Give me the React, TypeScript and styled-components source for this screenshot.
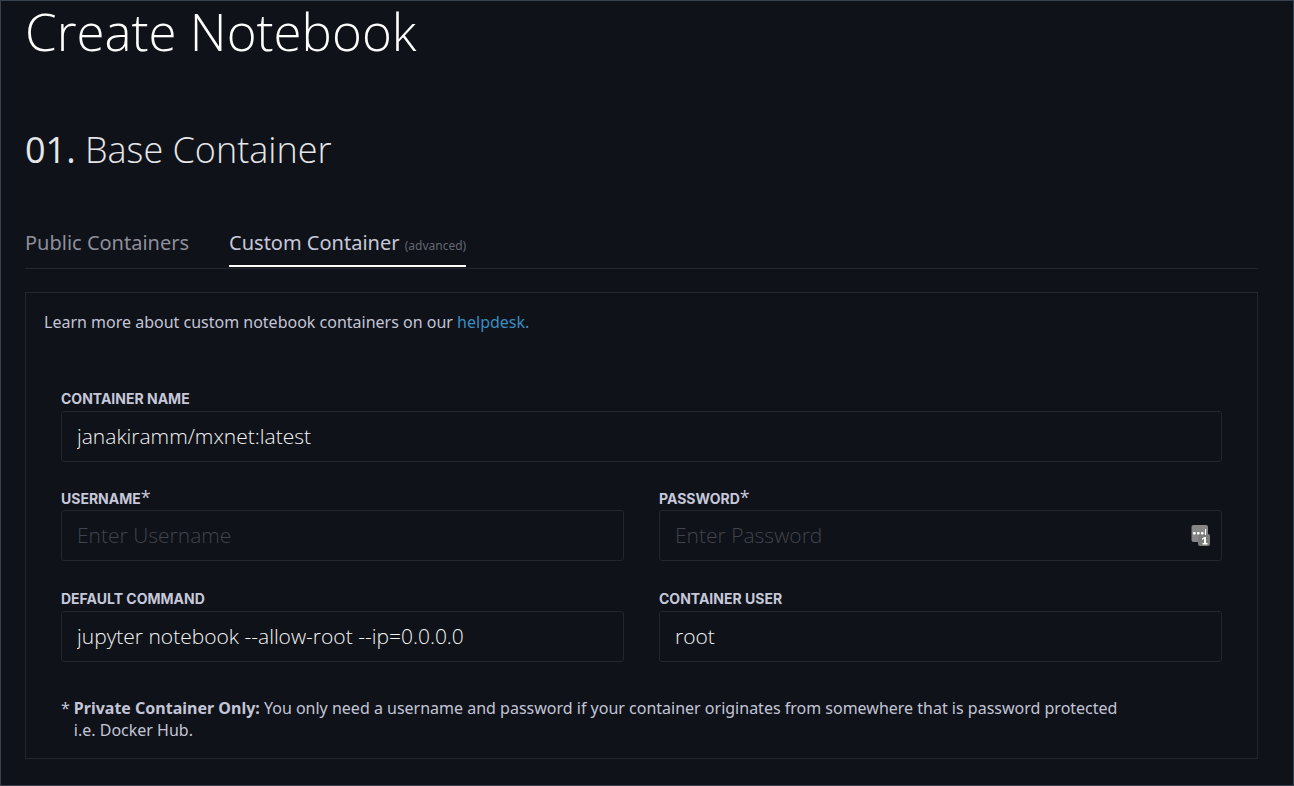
import React from "react";
import styled, { createGlobalStyle } from "styled-components";

const GlobalStyle = createGlobalStyle`
  *, *::before, *::after { box-sizing: border-box; }
  body {
    margin: 0;
    background: #0f1219;
    color: #c3c5d6;
    font-family: "Noto Sans", "Open Sans", sans-serif;
    font-size: 16px;
    line-height: 22px;
  }
`;

const Page = styled.main`
  min-height: 100vh;
  padding: 0 35px 26px 24px;
  border: 1px solid #37404c;
`;

const Title = styled.h1`
  margin: 0;
  color: #fff;
  font: 300 51px/60px "Open Sans", "Noto Sans", sans-serif;
`;

const SectionTitle = styled.h2`
  margin: 64px 0 0;
  color: #e6e6e8;
  font: 300 36px/50px "Open Sans", "Noto Sans", sans-serif;
`;

const SectionNumber = styled.span`
  font-weight: 400;
`;

const Tabs = styled.div`
  display: flex;
  gap: 40px;
  margin-top: 47px;
  border-bottom: 1px solid #23262f;
`;

const Tab = styled.button<{ $active?: boolean }>`
  height: 45px;
  padding: 0 0 2px;
  margin-bottom: 1px;
  border: 0;
  border-bottom: 2px solid ${(p) => (p.$active ? "#fff" : "transparent")};
  background: none;
  color: ${(p) => (p.$active ? "#c6c8d8" : "#8d8f9b")};
  font: 400 20px/28px "Noto Sans", "Open Sans", sans-serif;
  cursor: pointer;
`;

const TabHint = styled.small`
  color: #646672;
  font-size: 12px;
  line-height: 16px;
`;

const Panel = styled.section`
  margin-top: 23px;
  padding: 18px 35px 17px;
  border: 1px solid #23262f;
`;

const Intro = styled.p`
  margin: 0 -17px;
`;

const Link = styled.a`
  color: #3c8dc0;
  text-decoration: none;
`;

const Form = styled.form`
  display: grid;
  grid-template-columns: 1fr 1fr;
  column-gap: 35px;
  margin-top: 56px;
`;

const Field = styled.div<{ $wide?: boolean }>`
  display: flex;
  flex-direction: column;
  grid-column: ${(p) => (p.$wide ? "1 / -1" : "auto")};
  padding-bottom: ${(p) => (p.$wide ? "26px" : "28px")};
`;

const Label = styled.label`
  height: 22px;
  color: #c6c8da;
  font: 700 14px/20px Inter, "Open Sans", sans-serif;
  text-transform: uppercase;
`;

const Star = styled.span`
  font: 400 18px/18px "Open Sans", "Noto Sans", sans-serif;
`;

const InputWrap = styled.div`
  position: relative;
`;

const Input = styled.input`
  display: block;
  width: 100%;
  height: 51px;
  padding: 0 15px 1px;
  border: 1px solid #23262f;
  border-radius: 3px;
  outline: 0;
  background: transparent;
  color: #f2f2f2;
  font: 300 21px/28px "Open Sans", "Noto Sans", sans-serif;

  &::placeholder {
    color: #41444d;
    opacity: 1;
  }
`;

const FillButton = styled.button`
  position: absolute;
  top: 15px;
  right: 12px;
  display: block;
  padding: 0;
  border: 0;
  background: none;
  cursor: pointer;
`;

const Note = styled.p`
  display: flex;
  gap: 4px;
  margin: 7px 0 0;
`;

function FillIcon() {
  return (
    <svg width="19" height="22" viewBox="0 0 19 22" aria-hidden="true">
      <rect x="0.500" y="0" width="16.500" height="17" rx="2" fill="#868686" />
      <rect x="7" y="9" width="12" height="12" rx="2" fill="#7b7b7b" />
      <g fill="#fff">
        <rect x="2" y="7" width="2.600" height="2.600" rx="0.800" />
        <rect x="6" y="7" width="2.600" height="2.600" rx="0.800" />
        <rect x="10" y="7" width="2.600" height="2.600" rx="0.800" />
        <rect x="14" y="4" width="1" height="6" />
        <path d="M11 13.500 13.600 12H15v6h1.500v1.500h-5V18H13v-4l-2 .8z" />
      </g>
    </svg>
  );
}

type TextFieldProps = {
  id: string;
  label: string;
  type?: string;
  value?: string;
  placeholder?: string;
  starred?: boolean;
  wide?: boolean;
  children?: React.ReactNode;
};

function TextField({ id, label, type = "text", value, placeholder, starred, wide, children }: TextFieldProps) {
  return (
    <Field $wide={wide}>
      <Label htmlFor={id}>
        {label}
        {starred && <Star>*</Star>}
      </Label>
      <InputWrap>
        <Input id={id} type={type} defaultValue={value} placeholder={placeholder} spellCheck={false} />
        {children}
      </InputWrap>
    </Field>
  );
}

export default function App() {
  return (
    <>
      <GlobalStyle />
      <Page>
        <Title>Create Notebook</Title>
        <SectionTitle>
          <SectionNumber>01.</SectionNumber> Base Container
        </SectionTitle>
        <Tabs role="tablist">
          <Tab type="button" role="tab" aria-selected={false}>
            Public Containers
          </Tab>
          <Tab type="button" role="tab" aria-selected $active>
            Custom Container <TabHint>(advanced)</TabHint>
          </Tab>
        </Tabs>
        <Panel>
          <Intro>
            Learn more about custom notebook containers on our <Link href="#helpdesk">helpdesk.</Link>
          </Intro>
          <Form>
            <TextField id="container-name" label="Container Name" value="janakiramm/mxnet:latest" wide />
            <TextField id="username" label="Username" placeholder="Enter Username" starred />
            <TextField id="password" label="Password" type="password" placeholder="Enter Password" starred>
              <FillButton type="button" aria-label="Fill password">
                <FillIcon />
              </FillButton>
            </TextField>
            <TextField id="command" label="Default Command" value="jupyter notebook --allow-root --ip=0.0.0.0" />
            <TextField id="user" label="Container User" value="root" />
          </Form>
          <Note>
            <span>*</span>
            <span>
              <strong>Private Container Only:</strong> You only need a username and password if your container
              originates from somewhere that is password protected
              <br />
              i.e. Docker Hub.
            </span>
          </Note>
        </Panel>
      </Page>
    </>
  );
}
